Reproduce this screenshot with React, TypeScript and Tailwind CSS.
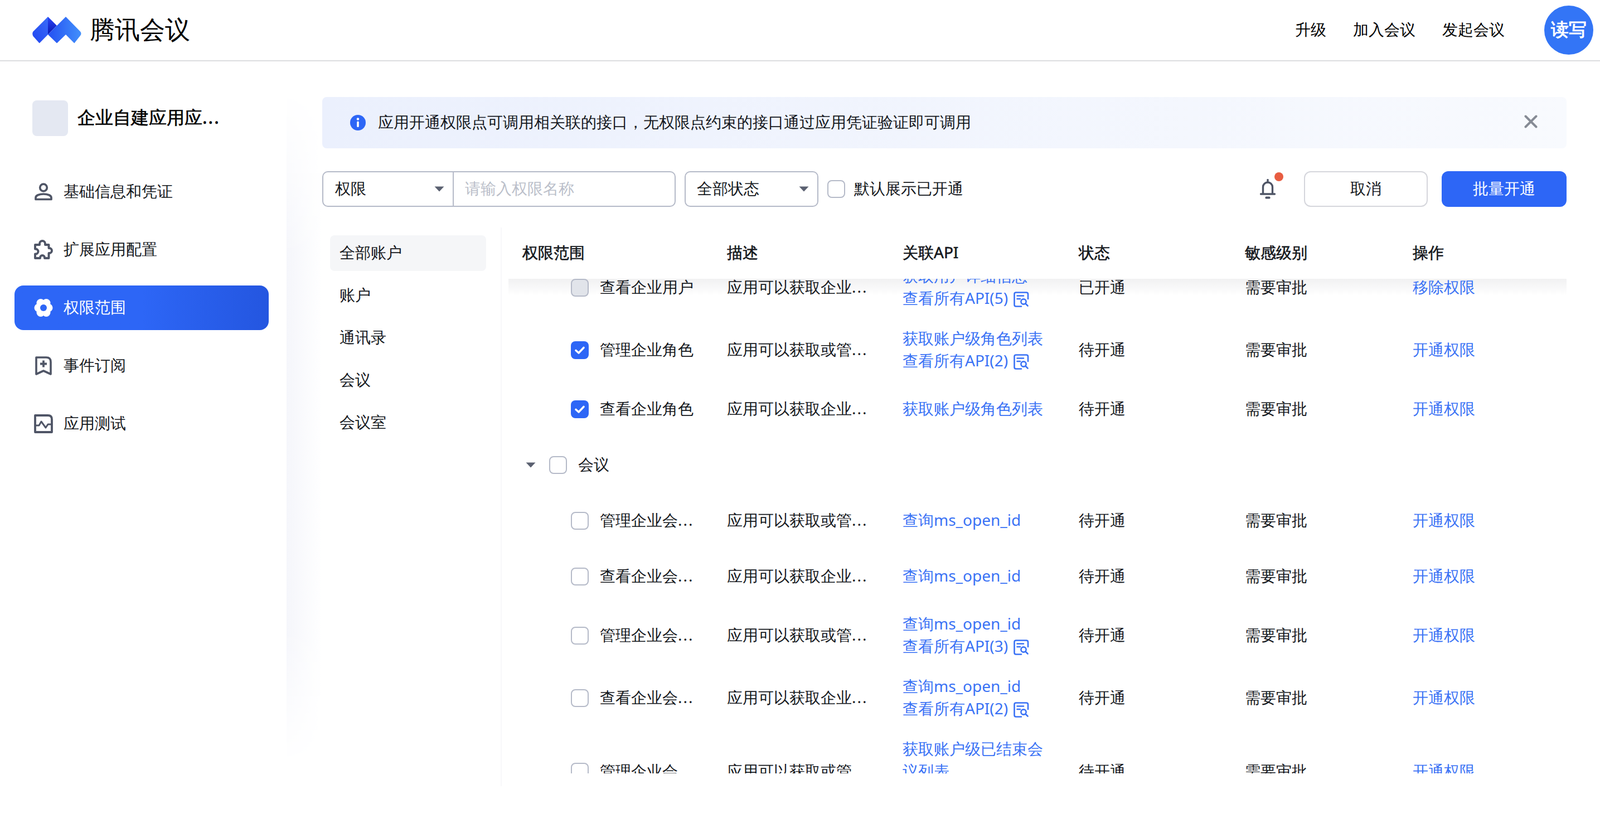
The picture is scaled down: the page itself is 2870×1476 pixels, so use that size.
import React from "react";

const FONT = "font-['Noto_Sans_CJK_SC','Noto_Sans',sans-serif]";
const LINK = "text-[#3a72f5]";
const MEDIUM = "[-webkit-text-stroke:0.6px_currentColor]";

type CheckState = "none" | "checked" | "disabled";

function Ell({ text }: { text: string }) {
  if (!text.endsWith("...")) return <>{text}</>;
  return (
    <>
      {text.slice(0, -3)}
      <span className="tracking-[2px]">...</span>
    </>
  );
}

function Check({ state = "none" }: { state?: CheckState }) {
  if (state === "checked") {
    return (
      <span className="flex h-[32px] w-[32px] shrink-0 items-center justify-center rounded-[8px] bg-[#2d66f6]">
        <svg width="20" height="16" viewBox="0 0 20 16" fill="none">
          <path d="M3 8.5 L8 13 L17 3.5" stroke="#fff" strokeWidth="3.6" strokeLinecap="round" strokeLinejoin="round" />
        </svg>
      </span>
    );
  }
  return (
    <span
      className={
        state === "disabled"
          ? "block h-[32px] w-[32px] shrink-0 rounded-[8px] border-2 border-[#b5bac8] bg-[#e1e4ea]"
          : "block h-[32px] w-[32px] shrink-0 rounded-[8px] border-2 border-[#b5bac8] bg-white"
      }
    />
  );
}

function Caret() {
  return (
    <svg width="18" height="10" viewBox="0 0 18 10" className="shrink-0">
      <path d="M0.5 0.5 H17.5 L9 9.5 Z" fill="#5a6070" />
    </svg>
  );
}

function DocSearch() {
  return (
    <svg width="28" height="28" viewBox="0 0 28 28" fill="none" className="ml-[10px] inline-block shrink-0 align-[-6px]">
      <path d="M26 13 V4.5 Q26 1.5 23 1.5 H4.5 Q1.5 1.5 1.5 4.5 V23.5 Q1.5 26.5 4.5 26.5 H14" stroke="#3a72f5" strokeWidth="2.6" strokeLinecap="round" />
      <path d="M6.5 7.5 H18 M6.5 13 H12" stroke="#3a72f5" strokeWidth="2.6" strokeLinecap="round" />
      <circle cx="18" cy="18" r="4.6" stroke="#3a72f5" strokeWidth="2.6" />
      <path d="M21.5 21.5 L25.5 25.5" stroke="#3a72f5" strokeWidth="2.6" strokeLinecap="round" />
    </svg>
  );
}

function Logo() {
  return (
    <svg width="88" height="48" viewBox="0 0 88 48" className="shrink-0">
      <defs>
        <linearGradient id="logoLeft" x1="0" y1="1" x2="1" y2="0">
          <stop offset="0" stopColor="#2145f0" />
          <stop offset="1" stopColor="#3a6cf8" />
        </linearGradient>
        <linearGradient id="logoMid" x1="0" y1="0" x2="0" y2="1">
          <stop offset="0" stopColor="#2a45fa" />
          <stop offset="1" stopColor="#0a18b0" />
        </linearGradient>
        <linearGradient id="logoRight" x1="0" y1="0" x2="1" y2="0">
          <stop offset="0" stopColor="#2450f2" />
          <stop offset="1" stopColor="#4290fb" />
        </linearGradient>
      </defs>
      <path d="M28 0 L28 32 L12.7 47.5 L1.5 35 Q-1 30 1.5 26.5 Z" fill="url(#logoLeft)" />
      <path d="M28 0 L44 16 L28 32 Z" fill="url(#logoMid)" />
      <path d="M60 0 L86 26.5 Q89 30 86 34 L75.3 47.5 L60 32 L44 47.5 L28 32 Z" fill="url(#logoRight)" />
    </svg>
  );
}

function NavIcon({ name }: { name: string }) {
  const c = "#4f5566";
  if (name === "user") {
    return (
      <svg width="34" height="34" viewBox="0 0 34 34" fill="none">
        <circle cx="17" cy="9.5" r="6.3" stroke={c} strokeWidth="3.7" />
        <path d="M3 30.5 V27.5 C3 23.5 9 21 17 21 C25 21 31 23.5 31 27.5 V30.5 Z" stroke={c} strokeWidth="3.7" strokeLinejoin="round" />
      </svg>
    );
  }
  if (name === "puzzle") {
    return (
      <svg width="34" height="36" viewBox="0 0 34 36" fill="none">
        <path d="M2 9 H10 V7 a5 5 0 0 1 10 0 V9 H26.5 V15 h1 a4.5 4.5 0 0 1 0 9 h-1 V33 H19 v-1 a4 4 0 0 0 -8 0 v1 H2 V25.5 h1 a4.5 4.5 0 0 0 0 -9 H2 Z" stroke={c} strokeWidth="3.9" strokeLinejoin="round" />
      </svg>
    );
  }
  if (name === "flower") {
    return (
      <svg width="34" height="34" viewBox="0 0 34 34">
        <mask id="flowerHole">
          <rect width="34" height="34" fill="#fff" />
          <circle cx="17" cy="17" r="6" fill="#000" />
        </mask>
        <g fill="#fff" mask="url(#flowerHole)">
          <circle cx="17" cy="17" r="13" />
          <circle cx="8" cy="17" r="7.5" />
          <circle cx="26" cy="17" r="7.5" />
          <circle cx="12" cy="8.5" r="7.5" />
          <circle cx="22" cy="8.5" r="7.5" />
          <circle cx="12" cy="25.5" r="7.5" />
          <circle cx="22" cy="25.5" r="7.5" />
        </g>
      </svg>
    );
  }
  if (name === "bookmark") {
    return (
      <svg width="34" height="34" viewBox="0 0 34 34" fill="none">
        <path d="M4 2 H22 Q30 2 30 10 V32 L17 26 L4 32 Z" stroke={c} strokeWidth="3.6" strokeLinejoin="round" />
        <path d="M11 13.5 H23 M17 7.5 V19.5" stroke={c} strokeWidth="3.8" />
      </svg>
    );
  }
  return (
    <svg width="34" height="34" viewBox="0 0 34 34" fill="none">
      <path d="M2 2 H25 Q32 2 32 9 V32 H2 Z" stroke={c} strokeWidth="3.8" strokeLinejoin="round" />
      <path d="M2 20 H9 L13 13 L21 24 L25 18 H32" stroke={c} strokeWidth="3" strokeLinejoin="round" />
    </svg>
  );
}

const NAV = [
  { icon: "user", label: "基础信息和凭证" },
  { icon: "puzzle", label: "扩展应用配置" },
  { icon: "flower", label: "权限范围", active: true },
  { icon: "bookmark", label: "事件订阅" },
  { icon: "activity", label: "应用测试" },
];

const CATEGORIES = ["全部账户", "账户", "通讯录", "会议", "会议室"];

type ApiLine = { text: string; icon?: boolean };
type Row = { check: CheckState; name: string; desc: string; api: ApiLine[]; status: string; action: string };

const MANAGE = "应用可以获取或管...";
const VIEW = "应用可以获取企业...";

const TOP_ROWS: Row[] = [
  {
    check: "disabled",
    name: "查看企业用户",
    desc: VIEW,
    api: [{ text: "获取用户详细信息" }, { text: "查看所有API(5)", icon: true }],
    status: "已开通",
    action: "移除权限",
  },
  {
    check: "checked",
    name: "管理企业角色",
    desc: MANAGE,
    api: [{ text: "获取账户级角色列表" }, { text: "查看所有API(2)", icon: true }],
    status: "待开通",
    action: "开通权限",
  },
  {
    check: "checked",
    name: "查看企业角色",
    desc: VIEW,
    api: [{ text: "获取账户级角色列表" }],
    status: "待开通",
    action: "开通权限",
  },
];

const MEETING_ROWS: Row[] = [
  { check: "none", name: "管理企业会...", desc: MANAGE, api: [{ text: "查询ms_open_id" }], status: "待开通", action: "开通权限" },
  { check: "none", name: "查看企业会...", desc: VIEW, api: [{ text: "查询ms_open_id" }], status: "待开通", action: "开通权限" },
  {
    check: "none",
    name: "管理企业会...",
    desc: MANAGE,
    api: [{ text: "查询ms_open_id" }, { text: "查看所有API(3)", icon: true }],
    status: "待开通",
    action: "开通权限",
  },
  {
    check: "none",
    name: "查看企业会...",
    desc: VIEW,
    api: [{ text: "查询ms_open_id" }, { text: "查看所有API(2)", icon: true }],
    status: "待开通",
    action: "开通权限",
  },
  {
    check: "none",
    name: "管理企业会...",
    desc: MANAGE,
    api: [{ text: "获取账户级已结束会议列表" }, { text: "查看所有API(2)", icon: true }],
    status: "待开通",
    action: "开通权限",
  },
];

const COLS = "grid grid-cols-[392px_315px_316px_298px_301px_276px]";

function TableRow({ row }: { row: Row }) {
  return (
    <div className={`${COLS} min-h-[100px] items-center py-[14px]`}>
      <div className="flex items-center gap-[20px] pl-[112px]">
        <Check state={row.check} />
        <span className="pb-[4px]">
          <Ell text={row.name} />
        </span>
      </div>
      <div className="pb-[4px]">
        <Ell text={row.desc} />
      </div>
      <div className={`w-[256px] pb-[4px] ${LINK}`}>
        {row.api.map((a) => (
          <div key={a.text}>
            {a.text}
            {a.icon ? <DocSearch /> : null}
          </div>
        ))}
      </div>
      <div className="pb-[4px]">{row.status}</div>
      <div className="pb-[4px]">需要审批</div>
      <div className={`pb-[4px] ${LINK}`}>{row.action}</div>
    </div>
  );
}

export default function App() {
  return (
    <div className={`${FONT} flex h-[1476px] w-[2870px] flex-col overflow-hidden bg-white text-[28px] leading-[40px] text-[#15181d]`}>
      <header className="flex h-[110px] shrink-0 items-center border-b-2 border-[#dcdde0] pl-[58px] pr-[12px]">
        <Logo />
        <span className="ml-[15px] pb-[4px] text-[45px] leading-[60px] text-black">腾讯会议</span>
        <div className="ml-auto flex items-center gap-[48px] text-black">
          <span className="pb-[4px]">升级</span>
          <span className="pb-[4px]">加入会议</span>
          <span className="pb-[4px]">发起会议</span>
          <span className="ml-[23px] flex h-[88px] w-[88px] items-center justify-center rounded-full bg-[#3375f6] pb-[4px] text-[32px] font-bold text-white">
            读写
          </span>
        </div>
      </header>

      <div className="flex min-h-0 flex-1">
        <aside className="w-[514px] shrink-0 pt-[70px]">
          <div className="flex h-[64px] items-center pl-[58px]">
            <span className="h-[64px] w-[64px] rounded-[8px] bg-[#e4e8f2]" />
            <span className={`ml-[17px] pb-[4px] text-[32px] text-black ${MEDIUM}`}>
              <Ell text="企业自建应用应..." />
            </span>
          </div>
          <nav className="ml-[26px] mt-[60px] flex w-[456px] flex-col gap-[24px]">
            {NAV.map((item) => (
              <div
                key={item.label}
                className={
                  item.active
                    ? "flex h-[80px] items-center gap-[19px] rounded-[16px] bg-gradient-to-r from-[#2d66f6] via-[#2d66f6] to-[#2456e0] pl-[35px] text-white"
                    : "flex h-[80px] items-center gap-[19px] rounded-[16px] pl-[35px]"
                }
              >
                <span className="flex w-[34px] items-center justify-center">
                  <NavIcon name={item.icon} />
                </span>
                <span className="pb-[4px]">{item.label}</span>
              </div>
            ))}
          </nav>
        </aside>

        <div className="mt-[50px] h-[1210px] w-[64px] shrink-0 bg-gradient-to-r from-[#f5f6fb] to-white [mask-image:linear-gradient(to_bottom,transparent,black_25%,black_80%,transparent)]" />

        <main className="w-[2232px] shrink-0 pt-[64px]">
          <div className="flex h-[92px] items-center rounded-[8px] bg-gradient-to-r from-[#ebf0fd] to-[#f8fafe] pl-[50px] pr-[52px]">
            <svg width="28" height="28" viewBox="0 0 28 28" className="shrink-0">
              <circle cx="14" cy="14" r="14" fill="#2d66f6" />
              <circle cx="14" cy="7.5" r="2.2" fill="#fff" />
              <rect x="12.2" y="11.5" width="3.6" height="10.5" rx="1.6" fill="#fff" />
            </svg>
            <span className="ml-[22px] pb-[4px]">应用开通权限点可调用相关联的接口，无权限点约束的接口通过应用凭证验证即可调用</span>
            <svg width="24" height="24" viewBox="0 0 24 24" fill="none" className="mb-[4px] ml-auto">
              <path d="M2.5 2.5 L21.5 21.5 M21.5 2.5 L2.5 21.5" stroke="#868b95" strokeWidth="4" strokeLinecap="round" />
            </svg>
          </div>

          <div className="mt-[41px] flex h-[64px] items-center">
            <div className="flex h-[64px] w-[634px] rounded-[10px] border-2 border-[#b5bac8]">
              <div className="flex w-[234px] shrink-0 items-center justify-between border-r-2 border-[#b5bac8] pl-[21px] pr-[15px]">
                <span className="pb-[4px]">权限</span>
                <Caret />
              </div>
              <input
                placeholder="请输入权限名称"
                className="min-w-0 flex-1 bg-transparent pb-[4px] pl-[20px] outline-none placeholder:text-[#bbbfca]"
              />
            </div>
            <div className="ml-[16px] flex h-[64px] w-[240px] items-center justify-between rounded-[10px] border-2 border-[#b5bac8] pl-[20px] pr-[15px]">
              <span className="pb-[4px]">全部状态</span>
              <Caret />
            </div>
            <span className="ml-[16px]">
              <Check />
            </span>
            <span className="ml-[16px] pb-[4px]">默认展示已开通</span>

            <span className="relative ml-auto block h-[36px] w-[28px]">
              <svg width="28" height="36" viewBox="0 0 28 36" fill="none">
                <path d="M5.5 26 V14.5 a8.5 8.5 0 0 1 17 0 V26" stroke="#4f5566" strokeWidth="3.4" />
                <path d="M14 1.5 V6" stroke="#4f5566" strokeWidth="3.4" strokeLinecap="round" />
                <path d="M1.5 27 H26.5" stroke="#4f5566" strokeWidth="3.4" strokeLinecap="round" />
                <rect x="9.5" y="31.5" width="9" height="4" rx="1.6" fill="#4f5566" />
              </svg>
              <span className="absolute left-[26px] top-[-12px] h-[16px] w-[16px] rounded-full bg-[#e85d41]" />
            </span>
            <button className="ml-[51px] h-[64px] w-[222px] rounded-[12px] border-2 border-[#d5d6dc] bg-white pb-[4px]">取消</button>
            <button className="ml-[25px] h-[64px] w-[224px] rounded-[12px] bg-[#2d66f6] pb-[4px] text-white">批量开通</button>
          </div>

          <div className="mt-[37px] flex h-[1002px]">
            <div className="w-[320px] shrink-0 pl-[14px] pr-[26px] pt-[14px]">
              <div className="flex flex-col gap-[12px]">
                {CATEGORIES.map((c, i) => (
                  <div
                    key={c}
                    className={
                      i === 0
                        ? "flex h-[64px] items-center rounded-[8px] bg-[#f5f6f8] pb-[4px] pl-[17px]"
                        : "flex h-[64px] items-center rounded-[8px] pb-[4px] pl-[17px]"
                    }
                  >
                    {c}
                  </div>
                ))}
              </div>
            </div>

            <div className="min-w-0 flex-1 border-l-2 border-[#f8f8fa] pl-[12px]">
              <div className={`${COLS} h-[92px] items-center ${MEDIUM}`}>
                <div className="pb-[4px] pl-[25px]">权限范围</div>
                <div className="pb-[4px]">描述</div>
                <div className="pb-[4px]">关联API</div>
                <div className="pb-[4px]">状态</div>
                <div className="pb-[4px]">敏感级别</div>
                <div className="pb-[4px]">操作</div>
              </div>
              <div className="relative h-[887px] overflow-hidden">
                <div className="pointer-events-none absolute inset-x-0 top-0 h-[30px] bg-gradient-to-b from-[#f1f1f2] to-transparent" />
                <div className="relative -mt-[40px]">
                  {TOP_ROWS.map((r) => (
                    <TableRow key={r.name} row={r} />
                  ))}
                  <div className="flex h-[100px] items-center pl-[31px]">
                    <Caret />
                    <span className="ml-[24px]">
                      <Check />
                    </span>
                    <span className="ml-[20px] pb-[4px]">会议</span>
                  </div>
                  {MEETING_ROWS.map((r, i) => (
                    <TableRow key={i} row={r} />
                  ))}
                </div>
              </div>
            </div>
          </div>
        </main>
      </div>
    </div>
  );
}
